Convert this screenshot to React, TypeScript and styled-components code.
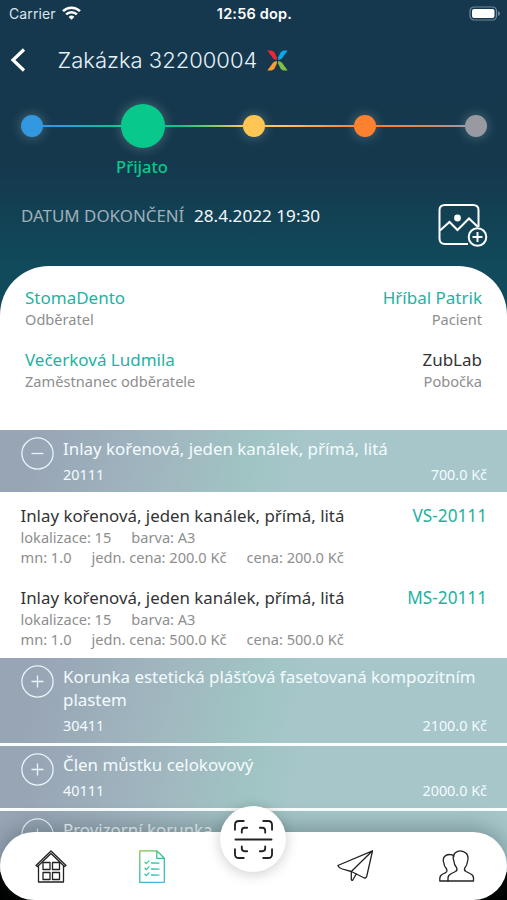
import React from "react";
import styled, { createGlobalStyle, css } from "styled-components";

const GlobalStyle = createGlobalStyle`
  * { box-sizing: border-box; }
  body { margin: 0; background: #000; font-family: "Noto Sans", "Open Sans", sans-serif; }
`;

const Screen = styled.div`
  position: relative;
  width: 100%;
  max-width: 507px;
  height: 900px;
  overflow: hidden;
  background: #000;
  display: flex;
  flex-direction: column;
`;

const Top = styled.header`
  flex: none;
  height: 324px;
  margin-bottom: -58.5px;
  background: linear-gradient(180deg, #15384e 0, #15384d 165px, #104a5b 265px, #104a5b 100%);
  color: #fff;
`;

const StatusBar = styled.div`
  display: grid;
  grid-template-columns: 1fr auto 1fr;
  align-items: center;
  height: 28px;
  padding: 0 7px 2px 9px;
  font-family: Inter, sans-serif;
  font-size: 14px;
`;

const Carrier = styled.div`
  display: flex;
  align-items: center;
  gap: 6px;
  color: #dbe5eb;
  letter-spacing: 0.12px;
`;

const Clock = styled.div`
  font-weight: 600;
  font-size: 14.5px;
  letter-spacing: 0.2px;
`;

const Battery = styled.svg`
  justify-self: end;
`;

const TitleBar = styled.div`
  display: flex;
  align-items: center;
  height: 64px;
  padding-left: 10px;
`;

const Title = styled.h1`
  margin: 0 10px 0 31.5px;
  font: 300 22px Inter, sans-serif;
  letter-spacing: 0;
  color: #e6f1f8;
  white-space: nowrap;
`;

const Stepper = styled.div`
  display: flex;
  align-items: center;
  height: 44px;
  margin-top: 11.5px;
  padding: 0 20px 0 20.5px;
`;

const Dot = styled.div<{ $color: string; $active?: boolean }>`
  flex: none;
  width: ${(p) => (p.$active ? 44 : 22)}px;
  height: ${(p) => (p.$active ? 44 : 22)}px;
  border-radius: 50%;
  background: ${(p) => p.$color};
  box-shadow: 0 0 11px 1px rgba(200, 220, 210, 0.28);
`;

const Connector = styled.div<{ $from: string; $to: string; $short?: boolean }>`
  flex: ${(p) => (p.$short ? "0 0 78px" : "1 1 0")};
  height: 2px;
  background: linear-gradient(90deg, ${(p) => p.$from} 20%, ${(p) => p.$to});
`;

const StepLabel = styled.div`
  width: 100px;
  margin: 7.5px 0 0 92px;
  text-align: center;
  font-size: 16.5px;
  line-height: 23px;
  font-weight: 500;
  color: #08c98b;
`;

const DateRow = styled.div`
  display: flex;
  align-items: flex-start;
  padding: 26px 19px 0 21px;
  font-size: 16.9px;
  line-height: 24px;
  white-space: nowrap;
`;

const DateLabel = styled.span`
  width: 173px;
  color: #9fb0ba;
`;

const DateValue = styled.span`
  flex: 1;
  font-size: 17.15px;
  color: #f2f8fb;
`;

const PhotoIcon = styled.svg`
  flex: none;
  margin-top: -0.5px;
`;

const Card = styled.section`
  flex: none;
  height: 164px;
  padding: 20px 25px 0;
  border-radius: 49px 49px 0 0;
  background: #fff;
  position: relative;
`;

const PartyRow = styled.div`
  display: flex;
  justify-content: space-between;
  height: 62px;
`;

const Party = styled.div<{ $end?: boolean }>`
  text-align: ${(p) => (p.$end ? "right" : "left")};
`;

const PartyName = styled.div<{ $plain?: boolean }>`
  font-size: 17px;
  line-height: 24px;
  color: ${(p) => (p.$plain ? "#333" : "#1eb2a0")};
`;

const Role = styled.div`
  margin-top: -1px;
  font-size: 14.6px;
  line-height: 20px;
  color: #8e8e8e;
`;

const List = styled.main`
  flex: none;
  display: flex;
  flex-direction: column;
  background: #fff;
`;

const Items = styled.div`
  padding-bottom: 2px;
`;

const Group = styled.div<{ $divided?: boolean }>`
  display: flex;
  padding: 7.5px 20px 6.5px 21px;
  color: #f4fbff;
  background: linear-gradient(105deg, #98a5b5 8%, #a1b8c0 34%, #a0c4c3 50%, #a6c6c9 58%);
  ${(p) =>
    p.$divided &&
    css`
      border-top: 3px solid #f8fdfd;
    `}
`;

const Toggle = styled.svg`
  flex: none;
  width: 33px;
  height: 33px;
  margin: 0 9.5px 0 -0.5px;
`;

const GroupBody = styled.div`
  flex: 1;
`;

const GroupName = styled.div`
  max-width: 420px;
  font-size: 16.9px;
  line-height: 23px;
`;

const GroupMeta = styled.div`
  display: flex;
  justify-content: space-between;
  min-height: 21px;
  margin-top: 4px;
  font-size: 14.4px;
  line-height: 22px;
  margin-bottom: -1px;
`;

const Item = styled.article`
  height: 82px;
  padding: 12.5px 20px 0 20.5px;
  color: #333;
`;

const ItemHead = styled.div`
  display: flex;
  justify-content: space-between;
  margin-bottom: -1px;
  font-size: 16.85px;
  line-height: 24px;
`;

const ItemCode = styled.span`
  font-size: 17.2px;
  color: #1eb2a0;
`;

const ItemLine = styled.div`
  display: flex;
  gap: 20px;
  font-size: 14.6px;
  line-height: 20px;
  color: #8e8e8e;
`;

const Nav = styled.nav`
  position: absolute;
  inset: auto 0 0 0;
  height: 68px;
  border-radius: 34px;
  background: #fff;
  box-shadow: 0 -4px 22px rgba(40, 60, 65, 0.38);
  display: grid;
  grid-template-columns: repeat(5, 1fr);
  align-items: center;
  justify-items: center;
`;

const ScanButton = styled.div`
  width: 66px;
  height: 66px;
  margin-top: -54px;
  border-radius: 50%;
  background: #fff;
  box-shadow: 0 2px 14px rgba(0, 0, 0, 0.2);
  display: grid;
  place-items: center;
`;

const NavIcon = styled.svg<{ $weight?: number }>`
  fill: none;
  stroke: #222;
  stroke-width: ${(p) => p.$weight ?? 1.3};
  stroke-linejoin: round;
  stroke-linecap: round;
  overflow: visible;
`;

const steps = ["#3298e2", "#08c98b", "#ffc653", "#ff812f", "#9999a2"];

const items = [
  { code: "VS-20111", price: "200.0 Kč" },
  { code: "MS-20111", price: "500.0 Kč" },
];

function GroupRow(props: { name: string; code?: string; price?: string; open?: boolean; divided?: boolean }) {
  return (
    <Group $divided={props.divided}>
      <Toggle viewBox="0 0 33 33" fill="none" stroke="#e8f5fc" strokeWidth="1.3">
        <circle cx="16.5" cy="16.5" r="15.6" />
        <path d={props.open ? "M10.5 16.5h12" : "M10.5 16.5h12M16.5 10.5v12"} />
      </Toggle>
      <GroupBody>
        <GroupName>{props.name}</GroupName>
        <GroupMeta>
          <span>{props.code}</span>
          <span>{props.price}</span>
        </GroupMeta>
      </GroupBody>
    </Group>
  );
}

export default function App() {
  return (
    <Screen>
      <GlobalStyle />
      <Top>
        <StatusBar>
          <Carrier>
            Carrier
            <svg width="19" height="14" viewBox="0 0 19 14" fill="none" stroke="#fff" strokeWidth="2.5">
              <path d="M1 5.1a12.2 12.2 0 0 1 17 0M4.1 8.3a7.8 7.8 0 0 1 10.8 0" />
              <path d="M9.5 13.8 6.6 10.9a4.2 4.2 0 0 1 5.8 0Z" fill="#fff" stroke="none" />
            </svg>
          </Carrier>
          <Clock>12:56 dop.</Clock>
          <Battery width="31" height="15" viewBox="0 0 31 15">
            <rect x="1" y="1" width="26.5" height="13" rx="4" fill="none" stroke="#73899a" strokeWidth="1.2" />
            <rect x="3" y="3" width="22.5" height="9" rx="2" fill="#fff" />
            <path d="M29 5v5q2-1 2-2.5T29 5" fill="#73899a" />
          </Battery>
        </StatusBar>
        <TitleBar>
          <svg width="16" height="24" viewBox="0 0 16 24" fill="none" stroke="#fff" strokeWidth="3.2">
            <path d="M14 1.5 3 12l11 10.5" />
          </svg>
          <Title>Zakázka 32200004</Title>
          <svg width="21" height="21" viewBox="0 0 21 21">
            <path d="M.3.5H4.5Q6.5.7 7.6 2.8L9.9 7.5V10.1Q7.500 10 6 8.3Z" fill="#ee2637" />
            <path d="M20.7.5H16.5Q14.5.7 13.4 2.8L11.1 7.5V10.1Q13.5 10 15 8.3Z" fill="#08a9e8" />
            <path d="M.3 20.5H4.5Q6.5 20.3 7.6 18.2L9.9 13.5V10.9Q7.500 11 6 12.7Z" fill="#f99d32" />
            <path d="M20.7 20.5H16.5Q14.5 20.3 13.4 18.2L11.1 13.5V10.9Q13.5 11 15 12.7Z" fill="#82c044" />
          </svg>
        </TitleBar>
        <Stepper>
          {steps.map((color, i) => (
            <React.Fragment key={color}>
              {i > 0 && <Connector $from={steps[i - 1]} $to={color} $short={i < 3} />}
              <Dot $color={color} $active={i === 1} />
            </React.Fragment>
          ))}
        </Stepper>
        <StepLabel>Přijato</StepLabel>
        <DateRow>
          <DateLabel>DATUM DOKONČENÍ</DateLabel>
          <DateValue>28.4.2022 19:30</DateValue>
          <PhotoIcon width="50" height="44" viewBox="0 0 50 44" fill="none" stroke="#fff" strokeWidth="2">
            <path d="M30 40H7q-5.5 0-5.5-5.5V6Q1.5 1 7 1h28q5.5 0 5.5 5v17" />
            <path d="m2 26.5 9.5-8.5 8 8 11.5-11.5L40 23" />
            <circle cx="19.5" cy="14" r="2.4" fill="#fff" />
            <circle cx="39.5" cy="33" r="8.8" />
            <path d="M34.5 33h10M39.5 28v10" />
          </PhotoIcon>
        </DateRow>
      </Top>
      <Card>
        <PartyRow>
          <Party>
            <PartyName>StomaDento</PartyName>
            <Role>Odběratel</Role>
          </Party>
          <Party $end>
            <PartyName>Hříbal Patrik</PartyName>
            <Role>Pacient</Role>
          </Party>
        </PartyRow>
        <PartyRow>
          <Party>
            <PartyName>Večerková Ludmila</PartyName>
            <Role>Zaměstnanec odběratele</Role>
          </Party>
          <Party $end>
            <PartyName $plain>ZubLab</PartyName>
            <Role>Pobočka</Role>
          </Party>
        </PartyRow>
      </Card>
      <List>
        <GroupRow name="Inlay kořenová, jeden kanálek, přímá, litá" code="20111" price="700.0 Kč" open />
        <Items>
          {items.map((item) => (
            <Item key={item.code}>
              <ItemHead>
                <span>Inlay kořenová, jeden kanálek, přímá, litá</span>
                <ItemCode>{item.code}</ItemCode>
              </ItemHead>
              <ItemLine>
                <span>lokalizace: 15</span>
                <span>barva: A3</span>
              </ItemLine>
              <ItemLine>
                <span>mn: 1.0</span>
                <span>jedn. cena: {item.price}</span>
                <span>cena: {item.price}</span>
              </ItemLine>
            </Item>
          ))}
        </Items>
        <GroupRow name="Korunka estetická plášťová fasetovaná kompozitním plastem" code="30411" price="2100.0 Kč" />
        <GroupRow name="Člen můstku celokovový" code="40111" price="2000.0 Kč" divided />
        <GroupRow name="Provizorní korunka" divided />
      </List>
      <Nav>
        <NavIcon width="32" height="33" viewBox="0 0 32 33">
          <path d="M1 15.5 16 1l15 14.5-1.5 1L16 3.5 2.5 16.5ZM3.5 16v16h25V16" />
          <path d="M8 12.5h7v7H8zM17.5 12.5h7v7h-7zM8 22.5h7v7H8zM17.5 22.5h7v7h-7z" />
        </NavIcon>
        <NavIcon width="26" height="33" viewBox="0 0 26 33">
          <defs>
            <linearGradient id="sheet" x1="0" y1="0" x2="26" y2="33" gradientUnits="userSpaceOnUse">
              <stop offset="0" stopColor="#8bc540" />
              <stop offset=".5" stopColor="#29c3a0" />
              <stop offset="1" stopColor="#45bde8" />
            </linearGradient>
          </defs>
          <g stroke="url(#sheet)">
            <path d="M.8.8h17l7.5 7.5v24H.8ZM17.8.8v7.5h7.5" />
            <path d="m6 12.3 1.3 1.3 2.7-2.7M6 18.3l1.3 1.3 2.7-2.7M6 24.3l1.3 1.3 2.7-2.7M12.5 13l7.5.1M12.5 19l7.5.1M12.5 25l7.5.1" />
          </g>
        </NavIcon>
        <ScanButton>
          <NavIcon $weight={1.9} width="39" height="39" viewBox="0 0 40 40">
            <path d="M1 10V5q0-4 4-4h5M30 1h5q4 0 4 4v5M39 30v5q0 4-4 4h-5M10 39H5q-4 0-4-4v-5M8 13v-2q0-3 3-3h2.5M26.5 8h2.5q3 0 3 3v2M32 27v2q0 3-3 3h-2.5M13.5 32h-2.5q-3 0-3-3v-2M1.5 20h37" />
          </NavIcon>
        </ScanButton>
        <NavIcon width="36" height="32" viewBox="0 0 36 32">
          <path d="M35.5.8.8 15.5q1 2.5 4.5 3.5l9 2.5 12 6q2.7 1.5 3.5-1.5ZM14.3 21.5 35.5.8M14.3 21.5v8q.5 1.5 1.5.5l3.4-6" />
        </NavIcon>
        <NavIcon width="35" height="32" viewBox="0 0 35 32">
          <path d="M9 31v-3q0-3 3.5-4.5l4-2q2.5-1.5 1-4-2.5-3-2.5-6-2-5 1-8.5Q18.5.8 21.5.8t6 2.7q2.5 3.5 1 8-.3 3.5-2.5 6-1.5 2.5 1 4l4 2q3.5 1.5 3.5 4.5v3Z" />
          <path d="M9 31H.8v-2.5q0-3 3-4.5 3.5-1.3 4-2.5.5-1.8-.8-3.5-2-2-2-4.5-1.700-4 .5-7 2-2.2 5.5-2 2.3 0 4 1.5" />
        </NavIcon>
      </Nav>
    </Screen>
  );
}
